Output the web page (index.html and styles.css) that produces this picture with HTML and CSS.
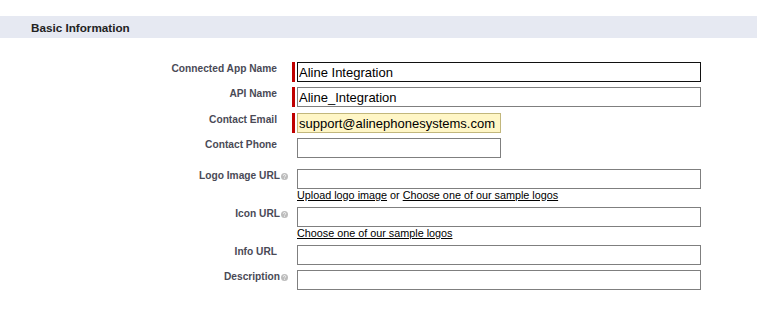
FILE: index.html
```html
<!DOCTYPE html>
<html>
<head>
<meta charset="utf-8">
<link rel="stylesheet" href="styles.css">
</head>
<body>
<div class="top-gap"></div>
<div class="section-head"><h3>Basic Information</h3></div>
<div class="form">
  <div class="row">
    <div class="label">Connected App Name</div>
    <div class="field req"><span class="bar"></span><input class="inp long focus" type="text" value="Aline Integration"></div>
  </div>
  <div class="row r2">
    <div class="label">API Name</div>
    <div class="field req"><span class="bar"></span><input class="inp long" type="text" value="Aline_Integration"></div>
  </div>
  <div class="row">
    <div class="label">Contact Email</div>
    <div class="field req"><span class="bar"></span><input class="inp short auto" type="text" value="support@alinephonesystems.com"></div>
  </div>
  <div class="row r-phone">
    <div class="label">Contact Phone</div>
    <div class="field"><input class="inp short" type="text" value=""></div>
  </div>
  <div class="row">
    <div class="label help-label">Logo Image URL<svg class="help" viewBox="0 0 8 8" width="7" height="7"><circle cx="4" cy="4" r="4" fill="#bdbdbd"/><path d="M2.7 3.1a1.3 1.3 0 1 1 1.8 1.1c-.35.15-.5.35-.5.75" stroke="#fff" stroke-width=".9" fill="none"/><circle cx="4" cy="6.2" r=".55" fill="#fff"/></svg></div>
    <div class="field col">
      <input class="inp long" type="text" value="">
      <div class="links"><a href="#">Upload logo image</a> or <a href="#">Choose one of our sample logos</a></div>
    </div>
  </div>
  <div class="row">
    <div class="label help-label">Icon URL<svg class="help" viewBox="0 0 8 8" width="7" height="7"><circle cx="4" cy="4" r="4" fill="#bdbdbd"/><path d="M2.7 3.1a1.3 1.3 0 1 1 1.8 1.1c-.35.15-.5.35-.5.75" stroke="#fff" stroke-width=".9" fill="none"/><circle cx="4" cy="6.2" r=".55" fill="#fff"/></svg></div>
    <div class="field col">
      <input class="inp long" type="text" value="">
      <div class="links"><a href="#">Choose one of our sample logos</a></div>
    </div>
  </div>
  <div class="row">
    <div class="label">Info URL</div>
    <div class="field"><input class="inp long" type="text" value=""></div>
  </div>
  <div class="row">
    <div class="label help-label">Description<svg class="help" viewBox="0 0 8 8" width="7" height="7"><circle cx="4" cy="4" r="4" fill="#bdbdbd"/><path d="M2.7 3.1a1.3 1.3 0 1 1 1.8 1.1c-.35.15-.5.35-.5.75" stroke="#fff" stroke-width=".9" fill="none"/><circle cx="4" cy="6.2" r=".55" fill="#fff"/></svg></div>
    <div class="field"><input class="inp long" type="text" value=""></div>
  </div>
</div>
</body>
</html>
```
FILE: styles.css
```css
html, body {
  margin: 0;
  padding: 0;
  background: #fff;
  font-family: "Liberation Sans", Arial, sans-serif;
}
.top-gap {
  height: 16px;
}
.section-head {
  background: #e6e9f2;
  height: 22px;
  box-sizing: border-box;
  padding: 4px 0 0 31px;
}
.section-head h3 {
  margin: 0;
  font-size: 11.7px;
  line-height: 15px;
  font-weight: bold;
  color: #222;
}
.form {
  padding-top: 24px;
}
.row {
  display: flex;
  align-items: flex-start;
  margin-bottom: 5px;
}
.row.r2 {
  margin-bottom: 6px;
}
.row.r-phone {
  margin-bottom: 11px;
}
.label {
  width: 288px;
  box-sizing: border-box;
  flex: none;
  text-align: right;
  padding: 1px 11px 0 0;
  font-size: 10.2px;
  line-height: 12px;
  font-weight: bold;
  color: #4a4a56;
}
.label.help-label {
  padding-right: 0;
}
.help {
  display: inline-block;
  margin-left: 1px;
  vertical-align: -0.5px;
}
.field {
  display: flex;
  align-items: flex-start;
  padding-left: 9px;
}
.field.req {
  padding-left: 4px;
  gap: 2px;
}
.field.col {
  flex-direction: column;
}
.bar {
  display: block;
  width: 3px;
  height: 20px;
  background: #c00000;
}
.inp {
  box-sizing: border-box;
  height: 20px;
  margin: 0;
  padding: 0 1px;
  border: 1px solid #7f7f7f;
  border-radius: 0;
  background: #fff;
  font-family: "Liberation Sans", Arial, sans-serif;
  font-size: 13px;
  color: #000;
  outline: none;
}
.inp.long {
  width: 404px;
}
.inp.short {
  width: 204px;
}
.inp.focus {
  border-color: #111;
}
.inp.auto {
  background: #fff6c6;
  border-color: #c2b77c;
}
.links {
  font-size: 10.8px;
  line-height: 13px;
  height: 13px;
  color: #000;
}
.links a {
  color: #000;
  text-decoration: underline;
}
```
